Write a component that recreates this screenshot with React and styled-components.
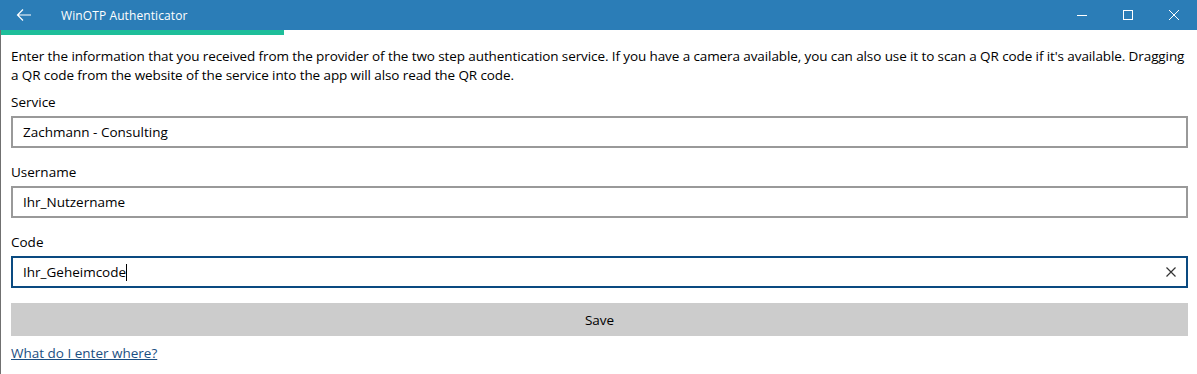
import React from "react";
import styled, { createGlobalStyle } from "styled-components";

const Global = createGlobalStyle`
  html, body { margin: 0; padding: 0; background: #ffffff; }
  body { font-family: "Open Sans", "Noto Sans", sans-serif; }
  * { box-sizing: border-box; }
`;

const Window = styled.div`
  width: 1197px;
  height: 374px;
  display: flex;
  flex-direction: column;
  overflow: hidden;
`;

const TitleBar = styled.div`
  height: 30px;
  background: #2b7db7;
  display: flex;
  align-items: center;
  color: #ffffff;
`;

const BackButton = styled.div`
  width: 48px;
  height: 30px;
  display: flex;
  align-items: center;
  justify-content: center;
  margin-right: 13px;
`;

const TitleText = styled.div`
  font-size: 12px;
  flex: 1;
  letter-spacing: 0.1px;
`;

const WinButton = styled.div`
  width: 46px;
  height: 30px;
  display: flex;
  align-items: center;
  justify-content: center;
`;

const Body = styled.div`
  flex: 1;
  border-left: 1px solid #707070;
  display: flex;
  flex-direction: column;
`;

const Progress = styled.div`
  height: 5px;
  width: 283px;
  background: #1ebe9a;
`;

const Content = styled.div`
  padding: 12px 9px 0 10px;
  display: flex;
  flex-direction: column;
  color: #000000;
`;

const Intro = styled.p`
  margin: 0 0 8px;
  font-size: 13.5px;
  line-height: 19px;
  letter-spacing: -0.1px;
`;

const Field = styled.div`
  display: flex;
  flex-direction: column;
  margin-bottom: 15px;
`;

const Label = styled.label`
  font-size: 13.5px;
  line-height: 18px;
  margin-bottom: 5px;
`;

const InputBox = styled.div`
  height: 32px;
  border: 2px solid ${(p) => (p.$focused ? "#0a4a80" : "#999999")};
  display: flex;
  align-items: center;
  padding: 0 10px 0 10px;
  font-size: 13.5px;
`;

const Value = styled.span`
  flex: 1;
`;

const Caret = styled.span`
  display: inline-block;
  width: 1px;
  height: 17px;
  background: #000;
  vertical-align: middle;
`;

const SaveButton = styled.div`
  height: 33px;
  background: #cccccc;
  display: flex;
  align-items: center;
  justify-content: center;
  font-size: 13.5px;
  color: #000;
`;

const HelpLink = styled.a`
  margin-top: 8px;
  font-size: 13.5px;
  color: #1b4f82;
  text-decoration: underline;
  align-self: flex-start;
`;

export default function App() {
  return (
    <Window>
      <Global />
      <TitleBar>
        <BackButton>
          <svg width="16" height="16" viewBox="0 0 16 16" fill="none" stroke="#fff" strokeWidth="1.2">
            <path d="M1.5 8 H15 M7 2.5 L1.5 8 L7 13.5" />
          </svg>
        </BackButton>
        <TitleText>WinOTP Authenticator</TitleText>
        <WinButton>
          <svg width="10" height="10" viewBox="0 0 10 10"><path d="M0 5.5 H10" stroke="#fff" strokeWidth="1" /></svg>
        </WinButton>
        <WinButton>
          <svg width="10" height="10" viewBox="0 0 10 10"><rect x="0.5" y="0.5" width="9" height="9" fill="none" stroke="#fff" strokeWidth="1" /></svg>
        </WinButton>
        <WinButton>
          <svg width="10" height="10" viewBox="0 0 10 10"><path d="M0 0 L10 10 M10 0 L0 10" stroke="#fff" strokeWidth="1" /></svg>
        </WinButton>
      </TitleBar>
      <Body>
        <Progress />
        <Content>
          <Intro>
            Enter the information that you received from the provider of the two step authentication service. If you have a camera available, you can also use it to scan a QR code if it's available. Dragging a QR code from the website of the service into the app will also read the QR code.
          </Intro>
          <Field>
            <Label>Service</Label>
            <InputBox><Value>Zachmann - Consulting</Value></InputBox>
          </Field>
          <Field>
            <Label>Username</Label>
            <InputBox><Value>Ihr_Nutzername</Value></InputBox>
          </Field>
          <Field>
            <Label>Code</Label>
            <InputBox $focused>
              <Value>Ihr_Geheimcode<Caret /></Value>
              <svg width="10" height="10" viewBox="0 0 10 10"><path d="M0.5 0.5 L9.5 9.5 M9.5 0.5 L0.5 9.5" stroke="#333" strokeWidth="1.2" /></svg>
            </InputBox>
          </Field>
          <SaveButton>Save</SaveButton>
          <HelpLink href="#">What do I enter where?</HelpLink>
        </Content>
      </Body>
    </Window>
  );
}
